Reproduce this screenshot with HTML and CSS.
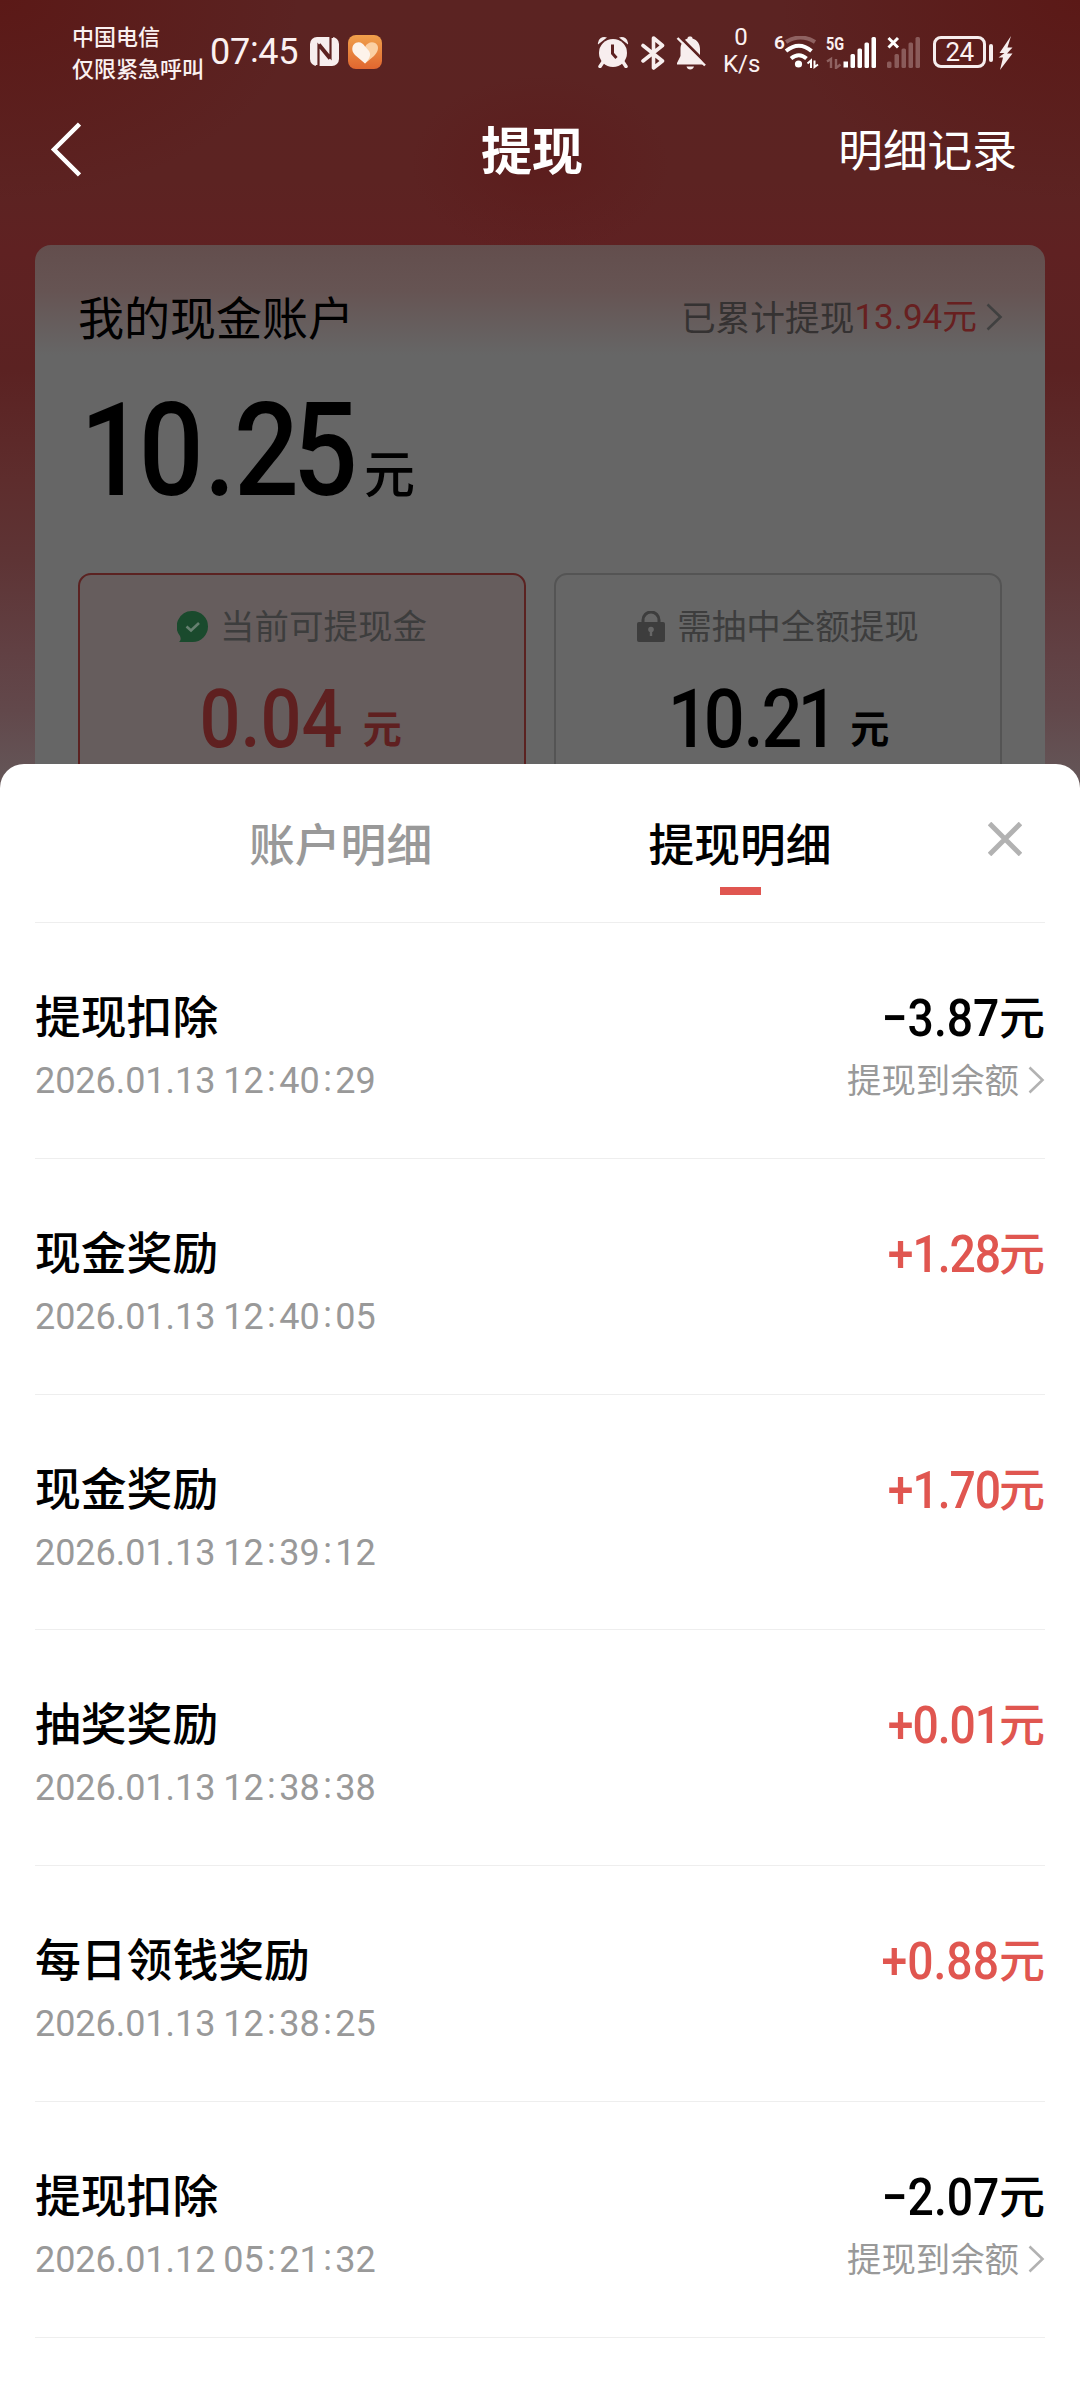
FILE: index.html
```html
<!DOCTYPE html>
<html lang="zh-CN">
<head>
<meta charset="utf-8">
<title>提现</title>
<link rel="stylesheet" href="styles.css">
</head>
<body>
<div class="screen">
  <header class="status">
    <div class="carrier"><div>中国电信</div><div>仅限紧急呼叫</div></div>
    <div class="clock">07<span class="colon">:</span>45</div>
    <svg class="nfc" width="29" height="29" viewBox="0 0 29 29"><rect width="29" height="29" rx="7" fill="#f7eeee"/><path d="M6 29H8.500V8.500L19.500 22M23 0H20.500V20.500L9.500 7" fill="none" stroke="#5d2221" stroke-width="2.200"/></svg>
    <svg class="heart" width="34" height="34" viewBox="0 0 34 34"><defs><linearGradient id="hg" x1="0" y1="0" x2="0" y2="1"><stop offset="0" stop-color="#f0a04c"/><stop offset="1" stop-color="#e0662f"/></linearGradient></defs><rect width="34" height="34" rx="8" fill="url(#hg)"/><path d="M17 12C20 6 27 6 29.500 10.500C31 14 29 18 26 21L17 28.500L12 20Z" fill="#fbd0a4"/><path d="M17 28.500L7 20C3 16 3.500 10 8 7.800C12 6.200 15 8.500 17 11.500L21 16C23 19 22 22 20 25Z" fill="#fdf3ea"/></svg>
    <div class="status-right">
      <svg class="alarm" width="32" height="32" viewBox="0 0 32 32" fill="#f7eeee"><circle cx="16" cy="17" r="14"/><path d="M1 8.500A6.500 6.500 0 0 1 10 1.500ZM31 8.500A6.500 6.500 0 0 0 22 1.500Z"/><path d="M6 26L3 30.500M26 26L29 30.500" stroke="#f7eeee" stroke-width="3.500" stroke-linecap="round"/><path d="M15.500 8.500V17.500L19.500 22" fill="none" stroke="#5d2221" stroke-width="3"/></svg>
      <svg class="bt" width="24" height="34" viewBox="0 0 24 34" fill="none" stroke="#f7eeee" stroke-width="3.600" stroke-linejoin="round" stroke-linecap="round"><path d="M2 9.500L21.500 25L12.500 32V2L21.500 9.500L2 25"/></svg>
      <svg class="bell" width="30" height="34" viewBox="0 0 30 34"><path d="M14 0.500C15.500 0.500 16.500 1 16.500 2.500C21.500 4 24 8 24 13V20L27 27V28.500H1V27L4.500 20V13C4.500 8 7 4 11.500 2.500C11.500 1 12.500 0.500 14 0.500ZM10.500 30.500H18C17.500 32.500 16 33.500 14.200 33.500S11 32.500 10.500 30.500Z" fill="#f7eeee"/><path d="M3 0L30 27" stroke="#5d2221" stroke-width="3"/><path d="M1.500 2L29 29.500" stroke="#f7eeee" stroke-width="2.400"/></svg>
      <div class="speed"><div>0</div><div>K/s</div></div>
      <div class="wifi"><span class="gen">6</span>
        <svg width="35" height="33" viewBox="0 0 35 33" fill="none" stroke="#fff" stroke-width="4"><path d="M2 6Q16.500 -3 31 6" stroke="#8f6261"/><path d="M2 15Q15 4.500 27.500 15"/><path d="M7 22.500Q15 16 22.500 22.500"/><circle cx="14.500" cy="28" r="3.600" fill="#fff" stroke="none"/><path d="M23.500 27.500L27 24.500V32M30.500 24.500V31L34 28.500" stroke-width="2"/></svg>
      </div>
      <div class="cell"><span class="gen5">5G</span>
        <svg width="50" height="33" viewBox="0 0 50 33"><path d="M1 25.500L5 23V32M10 23V32L14.500 28.500" fill="none" stroke="#8f6261" stroke-width="2.400"/><g fill="#fff"><rect x="17.500" y="25.500" width="4.500" height="6"/><rect x="24.500" y="18" width="4.500" height="14" rx="1.500"/><rect x="31.500" y="12.500" width="4.500" height="19.500" rx="1.500"/><rect x="38.500" y="6.500" width="4.500" height="25.500" rx="1.500"/><rect x="45.500" y="1" width="4.500" height="31" rx="1.500"/></g></svg>
      </div>
      <svg class="nosim" width="33" height="33" viewBox="0 0 33 33"><g fill="#8a5b5a"><rect x="0" y="25.500" width="4.500" height="6.500" rx="1.500"/><rect x="7.500" y="18" width="4.500" height="14" rx="1.500"/><rect x="14.500" y="12.500" width="4.500" height="19.500" rx="1.500"/><rect x="21.500" y="6.500" width="4.500" height="25.500" rx="1.500"/><rect x="28.500" y="1" width="4.500" height="31" rx="1.500"/></g><path d="M1.500 2L11 11.500M11 2L1.500 11.500" stroke="#fff" stroke-width="3"/></svg>
      <div class="battery">24</div>
      <div class="nub"></div>
      <svg class="bolt" width="15" height="34" viewBox="0 0 15 34"><path d="M13 0L1.500 17H6.500L0.500 21.500H5L2 34L14.500 17.500H9L14.500 11.500H9.500Z" fill="#f7eeee"/></svg>
    </div>
  </header>

  <nav class="nav">
    <svg class="back" width="32" height="56" viewBox="0 0 32 56" fill="none" stroke="#fff" stroke-width="4.500"><path d="M30.500 3L5 28.500L30.500 54"/></svg>
    <h1 class="nav-title">提现</h1>
    <a class="nav-link">明细记录</a>
  </nav>

  <section class="card">
    <div class="card-head">
      <span class="card-title">我的现金账户</span>
      <span class="card-total">已累计提现<span class="total-num"><span class="tn">13.94</span>元</span><svg width="17" height="28" viewBox="0 0 17 28" fill="none" stroke="#404040" stroke-width="2.600"><path d="M1.500 1.500L14.500 14L1.500 26.500"/></svg></span>
    </div>
    <div class="balance"><span class="balance-num">10<span class="dot">.</span>25</span><span class="balance-unit">元</span></div>
    <div class="boxes">
      <div class="box box-active">
        <div class="box-label"><svg width="31" height="31" viewBox="0 0 31 31"><path d="M15.500 0A15.500 15.500 0 1 1 15.500 31H2C4 29.500 4 27.500 3 25A15.500 15.500 0 0 1 15.500 0Z" fill="#1a4a2d"/><path d="M9.500 15.500L14 19.500L22 12" fill="none" stroke="#668070" stroke-width="2.600"/></svg><span>当前可提现金</span></div>
        <div class="box-amt"><span class="box-num">0.04</span><span class="box-unit">元</span></div>
      </div>
      <div class="box">
        <div class="box-label"><svg width="28" height="31" viewBox="0 0 28 31"><path d="M6 12V9A8 8 0 0 1 22 9V12" fill="none" stroke="#3d3d3d" stroke-width="3"/><rect x="0" y="11" width="28" height="20" rx="2" fill="#3d3d3d"/><circle cx="14" cy="18.500" r="2.800" fill="#666"/><path d="M14 19V25" stroke="#666" stroke-width="2.400"/></svg><span>需抽中全额提现</span></div>
        <div class="box-amt"><span class="box-num box-num-long">10<span class="dot">.</span>21</span><span class="box-unit">元</span></div>
      </div>
    </div>
  </section>

  <main class="sheet">
    <div class="tabs">
      <div class="tab">账户明细</div>
      <div class="tab tab-on">提现明细</div>
      <svg class="close" width="34" height="34" viewBox="0 0 34 34" stroke="#b2b2b2" stroke-width="5"><path d="M1.500 1.500L32.500 32.500M32.500 1.500L1.500 32.500"/></svg>
    </div>
    <ul class="list">
      <li class="row">
        <div class="left"><div class="name">提现扣除</div><div class="date">2026.01.13 12<span class="colon">:</span>40<span class="colon">:</span>29</div></div>
        <div class="right"><div class="amt"><span class="num">−3.87</span>元</div><div class="dest">提现到余额<svg width="17" height="28" viewBox="0 0 17 28" fill="none" stroke="#b2b2b2" stroke-width="2.600"><path d="M1.500 1.500L14.500 14L1.500 26.500"/></svg></div></div>
      </li>
      <li class="row">
        <div class="left"><div class="name">现金奖励</div><div class="date">2026.01.13 12<span class="colon">:</span>40<span class="colon">:</span>05</div></div>
        <div class="right"><div class="amt plus"><span class="num tight">+1.28</span>元</div></div>
      </li>
      <li class="row">
        <div class="left"><div class="name">现金奖励</div><div class="date">2026.01.13 12<span class="colon">:</span>39<span class="colon">:</span>12</div></div>
        <div class="right"><div class="amt plus"><span class="num tight">+1.70</span>元</div></div>
      </li>
      <li class="row">
        <div class="left"><div class="name">抽奖奖励</div><div class="date">2026.01.13 12<span class="colon">:</span>38<span class="colon">:</span>38</div></div>
        <div class="right"><div class="amt plus"><span class="num tight">+0.01</span>元</div></div>
      </li>
      <li class="row">
        <div class="left"><div class="name">每日领钱奖励</div><div class="date">2026.01.13 12<span class="colon">:</span>38<span class="colon">:</span>25</div></div>
        <div class="right"><div class="amt plus"><span class="num">+0.88</span>元</div></div>
      </li>
      <li class="row">
        <div class="left"><div class="name">提现扣除</div><div class="date">2026.01.12 05<span class="colon">:</span>21<span class="colon">:</span>32</div></div>
        <div class="right"><div class="amt"><span class="num">−2.07</span>元</div><div class="dest">提现到余额<svg width="17" height="28" viewBox="0 0 17 28" fill="none" stroke="#b2b2b2" stroke-width="2.600"><path d="M1.500 1.500L14.500 14L1.500 26.500"/></svg></div></div>
      </li>
    </ul>
  </main>
</div>
</body>
</html>
```
FILE: styles.css
```css
* { box-sizing: border-box; }
body { margin: 0; font-family: Roboto, "Noto Sans CJK SC", sans-serif; }
svg { display: block; flex: none; }

.screen {
  width: 1080px;
  height: 2400px;
  overflow: hidden;
  display: flex;
  flex-direction: column;
  background:
    radial-gradient(ellipse 130px 90px at 540px 165px, rgba(92, 27, 27, .7), rgba(92, 27, 27, 0)),
    radial-gradient(ellipse 300px 200px at 0 0, #5b1917, rgba(91, 25, 23, 0)),
    radial-gradient(ellipse 300px 200px at 1080px 0, #5b1917, rgba(91, 25, 23, 0)),
    linear-gradient(#5b2322 0, #5c2322 180px, #5f2122 250px, #5b2222 370px, #5e2d2d 480px, #5e3435 560px, #614043 650px, #62484b 710px, #645557 775px);
}

/* Status bar */
.status { height: 105px; padding: 0 67px 0 72px; display: flex; align-items: flex-start; color: #fbf1f1; }
.carrier { width: 138px; padding-top: 19px; font-size: 22px; line-height: 32px; font-weight: 500; white-space: nowrap; font-family: "Noto Sans CJK SC", sans-serif; }
.clock { width: 100px; padding-top: 31px; font-size: 36px; line-height: 42px; font-weight: 450; letter-spacing: -.3px; white-space: nowrap; }
.clock .colon { position: relative; top: -2px; }
.nfc { margin-top: 37px; }
.heart { margin: 35px 0 0 9px; }
.status-right { margin-left: auto; display: flex; align-items: flex-start; padding-top: 36px; }
.bt { margin-left: 12px; }
.bell { margin-left: 11px; }
.speed { width: 36px; margin: -12px 0 0 17px; font-size: 24px; line-height: 27px; font-weight: 450; text-align: center; }
.wifi { display: flex; margin-left: 15px; }
.gen { width: 10px; font-size: 19px; line-height: 14px; font-weight: 600; }
.cell { position: relative; margin-left: 7px; }
.gen5 { position: absolute; left: 0; top: 0; font-size: 19px; line-height: 15px; font-weight: 700; transform: scaleX(.76); transform-origin: left; }
.nosim { margin-left: 11px; }
.battery { width: 53px; height: 32px; margin-left: 13px; border: 3px solid #f7eeee; border-radius: 8px; font-size: 26px; line-height: 26px; font-weight: 450; letter-spacing: -.5px; text-align: center; }
.nub { width: 4px; height: 18px; margin: 8px 0 0 3px; border-radius: 2px; background: #f7eeee; }
.bolt { margin-left: 5px; }

/* Title bar */
.nav { height: 140px; padding: 0 63px 0 49px; display: grid; grid-template-columns: 1fr auto 1fr; align-items: start; color: #fff; font-family: "Noto Sans CJK SC", sans-serif; }
.back { margin-top: 16px; }
.nav-title { margin: 6px 0 0 -2px; font-size: 51px; line-height: 74px; font-weight: 700; }
.nav-link { justify-self: end; margin-top: 6px; font-size: 44.700px; line-height: 74px; }

/* Account card */
.card { width: 1010px; height: 600px; flex: none; margin: 0 35px; padding: 35px 42px 0 43px; border-radius: 16px; background: linear-gradient(#634e4d 0, #665453 45px, #666 110px); color: #000; }
.card-head { display: flex; justify-content: space-between; height: 71px; line-height: 70px; font-family: "Noto Sans CJK SC", sans-serif; }
.card-title { font-size: 46px; font-weight: 400; }
.card-total { display: flex; align-items: center; font-size: 34.700px; color: #353232; }
.card-total svg { margin-left: 9px; position: relative; top: 1px; }
.total-num { color: #672020; }
.tn { font-family: Roboto, sans-serif; font-size: 35px; }
.balance { display: flex; align-items: baseline; height: 170px; line-height: 170px; margin-top: 15px; font-weight: 500; }
.balance-num { font-size: 130px; width: 286px; letter-spacing: -7px; white-space: nowrap; transform: translateX(2px) scaleX(.88); transform-origin: left; font-weight: 470; }
.balance-num .dot { padding: 0 5px 0 7px; }
.balance-unit { font-family: "Noto Sans CJK SC", sans-serif; font-size: 51px; position: relative; top: -2px; }
.boxes { display: flex; gap: 28px; margin-top: 37px; }
.box { flex: 0 0 448px; height: 250px; border: 2px solid #545454; border-radius: 13px; padding-top: 26px; }
.box-active { background: #665d5d; border-color: #5b2221; }
.box-label { display: flex; justify-content: center; align-items: center; gap: 12px; height: 50px; font-size: 34.500px; line-height: 50px; color: #3d3d3d; font-family: "Noto Sans CJK SC", sans-serif; }
.box-label span { margin-top: -4px; }
.box-amt { display: flex; justify-content: center; align-items: baseline; margin: 20px 0 0 -22px; line-height: 96px; font-weight: 500; }
.box-active .box-amt { color: #5f2020; }
.box-num { font-size: 82px; font-weight: 470; white-space: nowrap; transform: scaleX(.88); transform-origin: right; }
.box-num-long { letter-spacing: -5.500px; margin-right: -3px; }
.box-num-long .dot { padding: 0 3px 0 4px; }
.box-unit { margin-left: 20px; font-family: "Noto Sans CJK SC", sans-serif; font-size: 39px; line-height: 40px; font-weight: 700; position: relative; top: -4px; }

/* Bottom sheet */
.sheet { position: absolute; left: 0; top: 764px; width: 1080px; height: 1636px; padding: 0 35px; background: #fff; border-radius: 24px 24px 0 0; font-family: "Noto Sans CJK SC", sans-serif; }
.tabs { height: 159px; display: flex; border-bottom: 1px solid #eee; }
.tab { flex: none; width: 184px; margin-left: 214px; padding-top: 41px; font-size: 45.800px; line-height: 74px; font-weight: 500; color: #999; }
.tab-on { color: #000; display: flex; flex-direction: column; align-items: center; }
.tab-on::after { content: ""; width: 41px; height: 8px; margin-top: 8px; background: #e05650; flex: none; }
.tab-on { margin-left: 215px; }
.close { margin: 58px 23px 0 auto; }
.list { list-style: none; margin: 0; padding: 0; }
.row { height: 235.800px; padding-top: 57px; display: flex; justify-content: space-between; border-bottom: 1px solid #eee; }
.name { font-size: 45.800px; line-height: 68px; font-weight: 500; color: #000; }
.date { margin-top: 3px; font-family: Roboto, sans-serif; font-size: 36px; line-height: 60px; font-weight: 400; letter-spacing: -.05px; word-spacing: -1px; color: #999; }
.date .colon { position: relative; top: -2px; padding: 0 3.500px; }
.right { text-align: right; }
.amt { font-size: 46px; line-height: 68px; height: 68px; font-weight: 500; color: #000; }
.plus { color: #e05650; }
.num { display: inline-block; font-family: Roboto, sans-serif; font-size: 52px; font-weight: 470; transform: translateY(2px) scaleX(.89); transform-origin: right; }
.tight { letter-spacing: -1.200px; margin-right: -1px; }
.dest { display: flex; align-items: center; justify-content: flex-end; gap: 9px; height: 60px; font-size: 34.400px; color: #999; }
.dest svg { position: relative; top: 2px; }
```
